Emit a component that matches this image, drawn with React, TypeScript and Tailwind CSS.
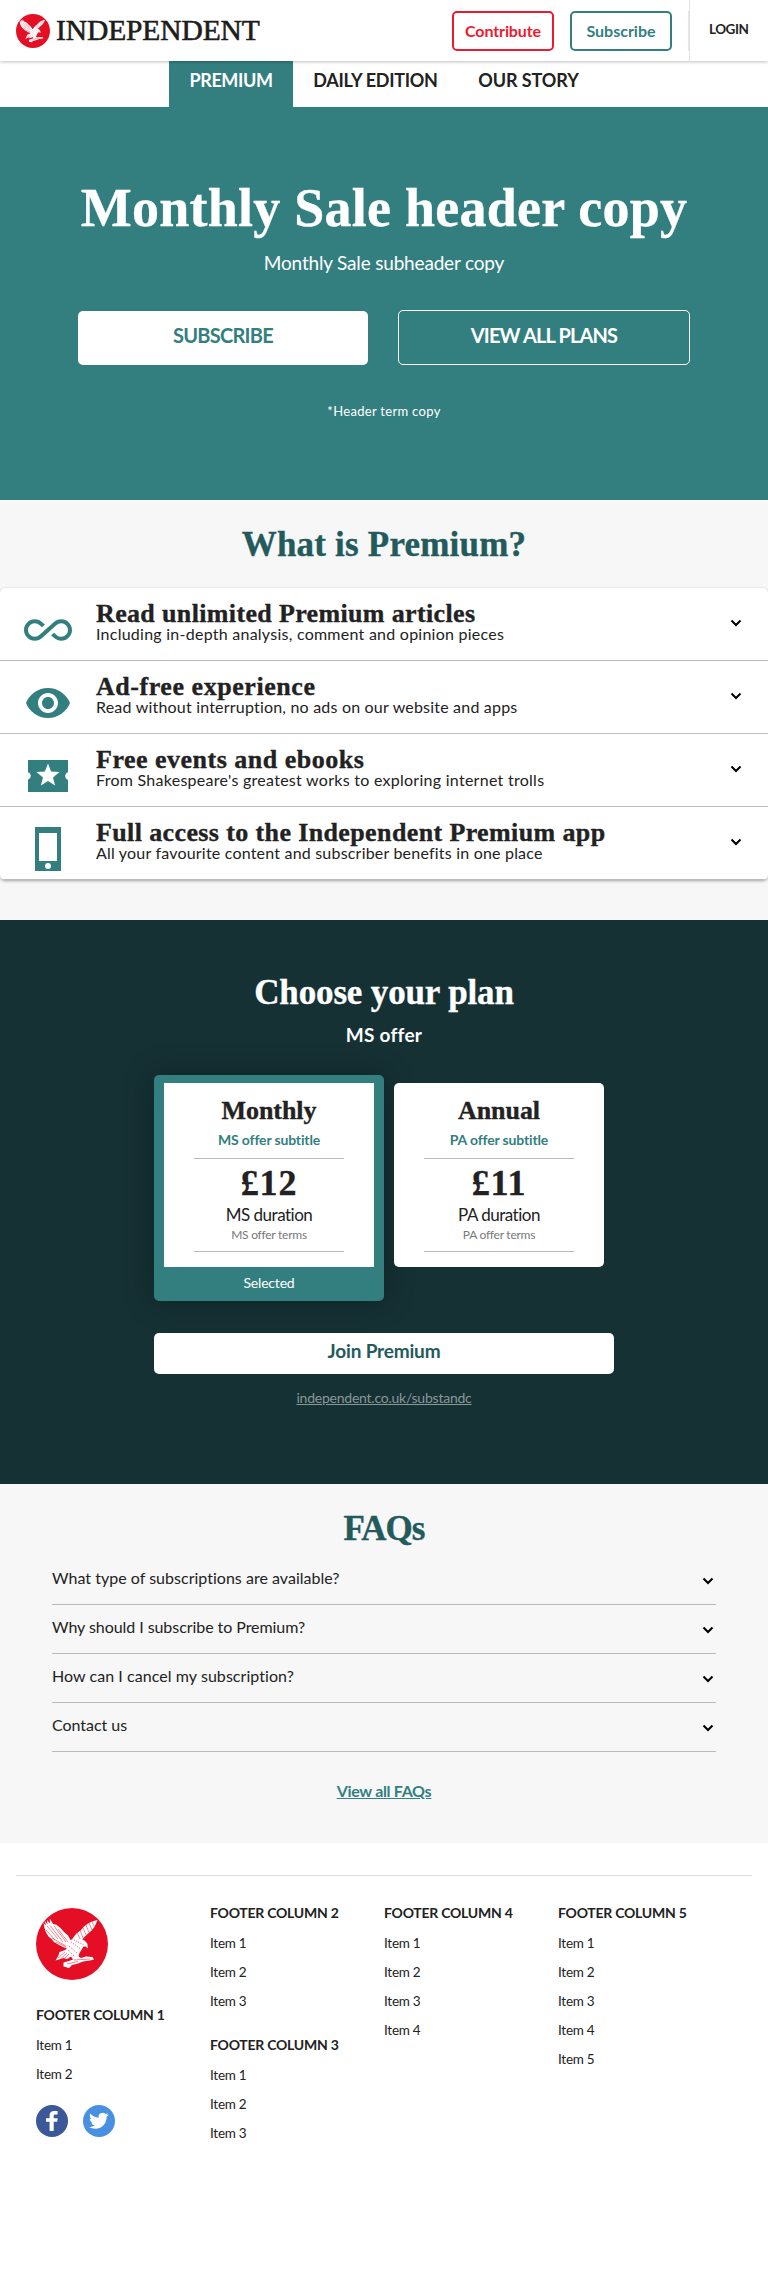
import type { ReactNode } from "react";

const Eagle = ({ className }: { className: string }) => (
  <svg viewBox="0 0 72 72" className={className} aria-hidden="true">
    <circle cx="36" cy="36" r="36" fill="#e50f25" />
    <g fill="#fff">
      <path d="M13.8 10.5 L17 16 L20.5 16.8 L24.5 20 L28 24 L32 27.5 L34.5 32 L37 31 L39 29.5 L42 30 L46 31 L49 33 L51.3 35.5 L52 40.5 L49.5 38.5 L47.5 38.5 L46 41 L43.5 45 L42.5 48.5 L45 50 L50 48.5 L56.5 49 L58 51.5 L54 52.5 L47 53.5 L42 55.5 L36 57 L33 60 L27.5 58.5 L27.5 54.5 L33 53 L37 51.5 L35 48.5 L31 51 L27.5 50 L19.5 52.5 L22.5 47.5 L23.5 44 L29 42 L31 40.5 L27 39 L24 37.5 L18 34 L15.5 31 L12.5 28.5 L10 24.5 L8.5 20 L7.5 15 L10 17.5 L8.5 12.5 L11.5 16.5 L11 12 L14 15.5 Z" />
      <path d="M61.5 12 L58.5 19 L55.5 22.5 L51 26.5 L46.5 31 L40 31.5 L36 31.5 L38 28.5 L41 25 L45 22 L48 18.5 L52 15.5 L56 13.5 Z" />
    </g>
    <g stroke="#e50f25" strokeWidth="0.5" fill="none">
      <path d="M11 18 L22 31 M14 17.5 L27 34 M18 18 L30 34 M10 22 L19 32 M22 21 L32 34 M16 30 L30 38 M20 34 L30 39" />
      <path d="M41 24 L44 31 M44 22 L47 30 M47 19.5 L50 27 M50 17 L53 24.5 M53 15 L56 22 M56 13.5 L58.5 19" />
      <path d="M22 50 L29 44 M25 50.5 L31 45 M29 50 L33 46 M38 52 L54 51 M31 56 L42 53.5" />
    </g>
    <path
      d="M35 34 L45 41 M33 38 L42 46 M38 32 L48 37 M32 42 L38 48"
      stroke="#e50f25"
      strokeWidth="0.7"
      strokeDasharray="1 1.4"
      fill="none"
    />
  </svg>
);

const Chevron = () => (
  <svg viewBox="0 0 12 8" className="h-2 w-3 shrink-0" aria-hidden="true">
    <path d="M1.5 1.5 L6 6 L10.5 1.5" fill="none" stroke="#000" strokeWidth="2" />
  </svg>
);

const icon = "ml-6 mt-[18px] size-12 shrink-0 fill-[#337f80]";

const InfinityIcon = () => (
  <svg viewBox="0 0 24 24" className={icon}>
    <path d="M18.6 6.62c-1.44 0-2.8.56-3.77 1.53L12 10.66 10.48 12h.01L7.8 14.39c-.64.64-1.49.99-2.4.99-1.87 0-3.39-1.51-3.39-3.38S3.53 8.62 5.4 8.62c.91 0 1.76.35 2.44 1.03l1.13 1 1.51-1.34L9.22 8.2C8.2 7.18 6.84 6.62 5.4 6.62 2.42 6.62 0 9.04 0 12s2.42 5.38 5.4 5.38c1.44 0 2.8-.56 3.77-1.53l2.83-2.5.01.01L13.52 12h-.01l2.69-2.39c.64-.64 1.49-.99 2.4-.99 1.87 0 3.39 1.51 3.39 3.38s-1.52 3.38-3.39 3.38c-.9 0-1.76-.35-2.44-1.03l-1.14-1.01-1.51 1.34 1.27 1.12c1.02 1.01 2.37 1.57 3.82 1.57 2.98 0 5.4-2.41 5.4-5.38s-2.42-5.37-5.4-5.37z" />
  </svg>
);
const EyeIcon = () => (
  <svg viewBox="0 0 24 24" className={icon}>
    <path d="M12 4.5C7 4.5 2.73 7.61 1 12c1.73 4.39 6 7.5 11 7.5s9.27-3.11 11-7.5c-1.73-4.39-6-7.5-11-7.5zM12 17c-2.76 0-5-2.24-5-5s2.24-5 5-5 5 2.24 5 5-2.24 5-5 5zm0-8c-1.66 0-3 1.34-3 3s1.34 3 3 3 3-1.34 3-3-1.34-3-3-3z" />
  </svg>
);
const TicketIcon = () => (
  <svg viewBox="0 0 24 24" className={icon}>
    <path
      fillRule="evenodd"
      d="M2 4H22V10.1A2 2 0 0 0 22 13.9V20H2V13.9A2 2 0 0 0 2 10.1ZM15.58 16.8L14.5 12.7 17.77 10 13.54 9.75 12 5.8 10.45 9.74 6.22 9.99 9.49 12.69 8.42 16.8 12 14.5Z"
    />
  </svg>
);
const PhoneIcon = () => (
  <svg viewBox="0 0 24 24" className={icon}>
    <path fillRule="evenodd" d="M5.5 1H18.5V23H5.5ZM7.5 4V18H16.5V4ZM12 19A1.5 1.5 0 1 0 12 22A1.5 1.5 0 1 0 12 19Z" />
  </svg>
);

const benefits: { Icon: () => ReactNode; title: string; text: string; titleTrack: string; track: string }[] = [
  { Icon: InfinityIcon, title: "Read unlimited Premium articles", text: "Including in-depth analysis, comment and opinion pieces", titleTrack: "tracking-[0.35px]", track: "tracking-[0.25px]" },
  { Icon: EyeIcon, title: "Ad-free experience", text: "Read without interruption, no ads on our website and apps", titleTrack: "tracking-[0.55px]", track: "tracking-[0.2px]" },
  { Icon: TicketIcon, title: "Free events and ebooks", text: "From Shakespeare's greatest works to exploring internet trolls", titleTrack: "tracking-[0.5px]", track: "tracking-[0.27px]" },
  { Icon: PhoneIcon, title: "Full access to the Independent Premium app", text: "All your favourite content and subscriber benefits in one place", titleTrack: "tracking-[0.38px]", track: "tracking-[0.2px]" },
];

const faqs = [
  { text: "What type of subscriptions are available?", track: "tracking-[0.02px]" },
  { text: "Why should I subscribe to Premium?", track: "tracking-[-0.06px]" },
  { text: "How can I cancel my subscription?", track: "tracking-[0.06px]" },
  { text: "Contact us", track: "tracking-[-0.03px]" },
];

const serif = "font-['Liberation_Serif',serif] font-bold [-webkit-text-stroke:0.35px_currentColor]";

const Plan = ({ name, prefix, price, className }: { name: string; prefix: string; price: string; className: string }) => (
  <div className={`flex h-[184px] w-[210px] flex-col items-center bg-white pt-[13px] ${className}`}>
    <h3 className={`${serif} text-[26px] leading-[30px] tracking-[-0.05px]`}>{name}</h3>
    <p className="mt-1 text-sm leading-5 font-bold tracking-[-0.15px] text-[#337f80]">{prefix} offer subtitle</p>
    <div className="mt-2 h-px w-[150px] bg-[#bbb]" />
    <p className={`${serif} mt-1.5 text-[36px] leading-9 tracking-[0.8px]`}>{price}</p>
    <p className="mt-0.5 text-[17px] leading-6 tracking-[-0.5px]">{prefix} duration</p>
    <p className="text-xs leading-4 tracking-[-0.25px] text-[#777]">{prefix} offer terms</p>
    <div className="mt-2 h-px w-[150px] bg-[#bbb]" />
  </div>
);

const FooterGroup = ({ n, count }: { n: number; count: number }) => (
  <div>
    <h4 className="text-sm leading-5 font-bold tracking-[-0.25px]">FOOTER COLUMN {n}</h4>
    <ul className="mt-1.5 -mb-px text-[13.5px] leading-[29px] tracking-[-0.25px]">
      {Array.from({ length: count }, (_, i) => (
        <li key={i}>Item {i + 1}</li>
      ))}
    </ul>
  </div>
);

export default function App() {
  return (
    <div className="min-h-[2276px] w-[768px] bg-white font-[Lato,sans-serif] whitespace-nowrap text-[#222]">
      <header className="relative z-10 flex h-[61px] bg-white shadow-[0_1px_3px_rgba(0,0,0,0.25)]">
        <Eagle className="mt-3.5 ml-4 size-[34px]" />
        <div className="mt-3 ml-1.5 w-[204px] font-['Liberation_Serif',serif] text-[29.5px] leading-[37px] tracking-[-0.1px] text-[#1d1d1b] [-webkit-text-stroke:0.6px_#1d1d1b]">INDEPENDENT</div>
        <button className="mt-[11px] ml-48 h-10 w-[102px] rounded-[5px] border-2 border-[#ec1a2e] text-base leading-9 font-bold tracking-[-0.1px] text-[#ec1a2e]">Contribute</button>
        <button className="mt-[11px] ml-4 h-10 w-[102px] rounded-[5px] border-2 border-[#337f80] text-base leading-9 font-bold text-[#337f80]">Subscribe</button>
        <div className="mt-[11px] ml-4 h-10 w-px bg-[#e2e8e8]" />
        <a className="h-[61px] w-[79px] border-l border-[#e2e2e2] pl-[19px] text-[13.5px] leading-[59px] font-bold tracking-[-0.5px]">LOGIN</a>
      </header>

      <nav className="flex h-[46px] justify-center text-center text-lg leading-[38px] font-bold">
        <a className="w-[124px] bg-[#337f80] tracking-[-0.4px] text-white">PREMIUM</a>
        <a className="w-[165px] tracking-[-0.28px]">DAILY EDITION</a>
        <a className="w-[141px] tracking-[-0.09px]">OUR STORY</a>
      </nav>

      <section className="flex h-[393px] flex-col items-center bg-[#337f80] text-white">
        <h1 className={`${serif} mt-[71px] text-[54px] leading-[60px] tracking-[0.25px]`}>Monthly Sale header copy</h1>
        <p className="mt-2.5 text-[19px] leading-[30px] tracking-[-0.18px]">Monthly Sale subheader copy</p>
        <div className="mt-8 flex items-end gap-[30px] text-center text-xl font-bold">
          <a className="h-[54px] w-[290px] rounded-[5px] bg-white leading-[48px] tracking-[-0.74px] text-[#337f80]">SUBSCRIBE</a>
          <a className="h-[55px] w-[292px] rounded-[5px] border border-white leading-[48px] tracking-[-0.86px]">VIEW ALL PLANS</a>
        </div>
        <p className="mt-9 text-[13px] leading-5 tracking-[0.31px]">*Header term copy</p>
      </section>

      <section className="h-[420px] bg-[#f7f7f7] pt-[25px]">
        <h2 className={`${serif} text-center text-[35px] leading-10 tracking-[0.2px] text-[#235a5c]`}>What is Premium?</h2>
        <div className="mt-[23px] overflow-hidden rounded-[5px] bg-white shadow-[0_1px_3px_rgba(0,0,0,0.35)]">
          {benefits.map(({ Icon, title, text, titleTrack, track }) => (
            <div key={title} className="flex h-[73px] border-b border-[#bbb]">
              <Icon />
              <div className="ml-6 flex-1 pt-[13px]">
                <h3 className={`${serif} text-[26px] leading-[26px] ${titleTrack}`}>{title}</h3>
                <p className={`-mt-px text-base leading-4 ${track}`}>{text}</p>
              </div>
              <div className="mt-[31px] mr-[26px]"><Chevron /></div>
            </div>
          ))}
        </div>
      </section>

      <section className="flex h-[564px] flex-col items-center bg-[#153134] pt-[53px]">
        <h2 className={`${serif} text-[35px] leading-10 tracking-[-0.15px] text-white`}>Choose your plan</h2>
        <p className="mt-2 text-[19px] leading-7 font-bold tracking-[0.25px] text-white">MS offer</p>
        <div className="mt-[26px] flex w-[460px] items-start">
          <div className="h-[226px] w-[230px] rounded-[5px] bg-[#337f80] px-2.5 pt-2 text-center shadow-[0_0_30px_rgba(0,0,0,0.3)]">
            <Plan name="Monthly" prefix="MS" price="£12" className="" />
            <p className="text-sm leading-8 tracking-[-0.19px] text-white">Selected</p>
          </div>
          <Plan name="Annual" prefix="PA" price="£11" className="mt-2 ml-2.5 rounded-[5px]" />
        </div>
        <button className="mt-8 h-[41px] w-[460px] rounded-[5px] bg-white pb-[5px] text-[19px] leading-9 font-bold tracking-[-0.17px] text-[#235a5c]">Join Premium</button>
        <a className="mt-3.5 text-sm leading-5 tracking-[-0.23px] text-[#8a9899] underline">independent.co.uk/substandc</a>
      </section>

      <section className="flex h-[359px] flex-col bg-[#f7f7f7] px-[52px] pt-[25px]">
        <h2 className={`${serif} text-center text-[35px] leading-10 tracking-[-0.98px] text-[#235a5c]`}>FAQs</h2>
        <ul className="mt-[7px]">
          {faqs.map(({ text, track }) => (
            <li key={text} className={`flex h-[49px] justify-between border-b border-[#bbb] pr-0.5 text-base leading-[44px] ${track}`}>
              {text}
              <div className="mt-[21px] leading-none"><Chevron /></div>
            </li>
          ))}
        </ul>
        <a className="mt-[27px] self-center text-base leading-6 font-bold tracking-[-0.31px] text-[#337f80] underline">View all FAQs</a>
      </section>

      <footer className="px-4 pt-8">
        <div className="flex border-t border-[#ddd] px-5 pt-[27px]">
          <div className="w-[174px]">
            <Eagle className="mt-[5px] mb-[25px] size-[72px]" />
            <FooterGroup n={1} count={2} />
            <div className="mt-[17px] flex gap-[15px]">
              <svg viewBox="0 0 32 32" className="size-8">
                <circle cx="16" cy="16" r="16" fill="#3b5998" />
                <path d="M13.6 26V16.8H10V13.2H13.6V11C13.6 7.4 15.2 6 18.3 6H21.6V9.6H19.4C17.9 9.6 17.7 10.2 17.7 11.4V13.2H21.7L21.2 16.8H17.7V26Z" fill="#fff" />
              </svg>
              <svg viewBox="0 0 32 32" className="size-8">
                <circle cx="16" cy="16" r="16" fill="#4a90e2" />
                <path transform="translate(6 6) scale(0.82)" d="M23.953 4.57a10 10 0 01-2.825.775 4.958 4.958 0 002.163-2.723c-.951.555-2.005.959-3.127 1.184a4.92 4.92 0 00-8.384 4.482C7.69 8.095 4.067 6.13 1.64 3.162a4.822 4.822 0 00-.666 2.475c0 1.71.87 3.213 2.188 4.096a4.904 4.904 0 01-2.228-.616v.06a4.923 4.923 0 003.946 4.827 4.996 4.996 0 01-2.212.085 4.936 4.936 0 004.604 3.417 9.867 9.867 0 01-6.102 2.105c-.39 0-.779-.023-1.17-.067a13.995 13.995 0 007.557 2.209c9.053 0 13.998-7.496 13.998-13.985 0-.21 0-.42-.015-.63A9.935 9.935 0 0024 4.59z" fill="#fff" />
              </svg>
            </div>
          </div>
          <div className="flex w-[174px] flex-col gap-5">
            <FooterGroup n={2} count={3} />
            <FooterGroup n={3} count={3} />
          </div>
          <div className="w-[174px]"><FooterGroup n={4} count={4} /></div>
          <div><FooterGroup n={5} count={5} /></div>
        </div>
      </footer>
    </div>
  );
}
